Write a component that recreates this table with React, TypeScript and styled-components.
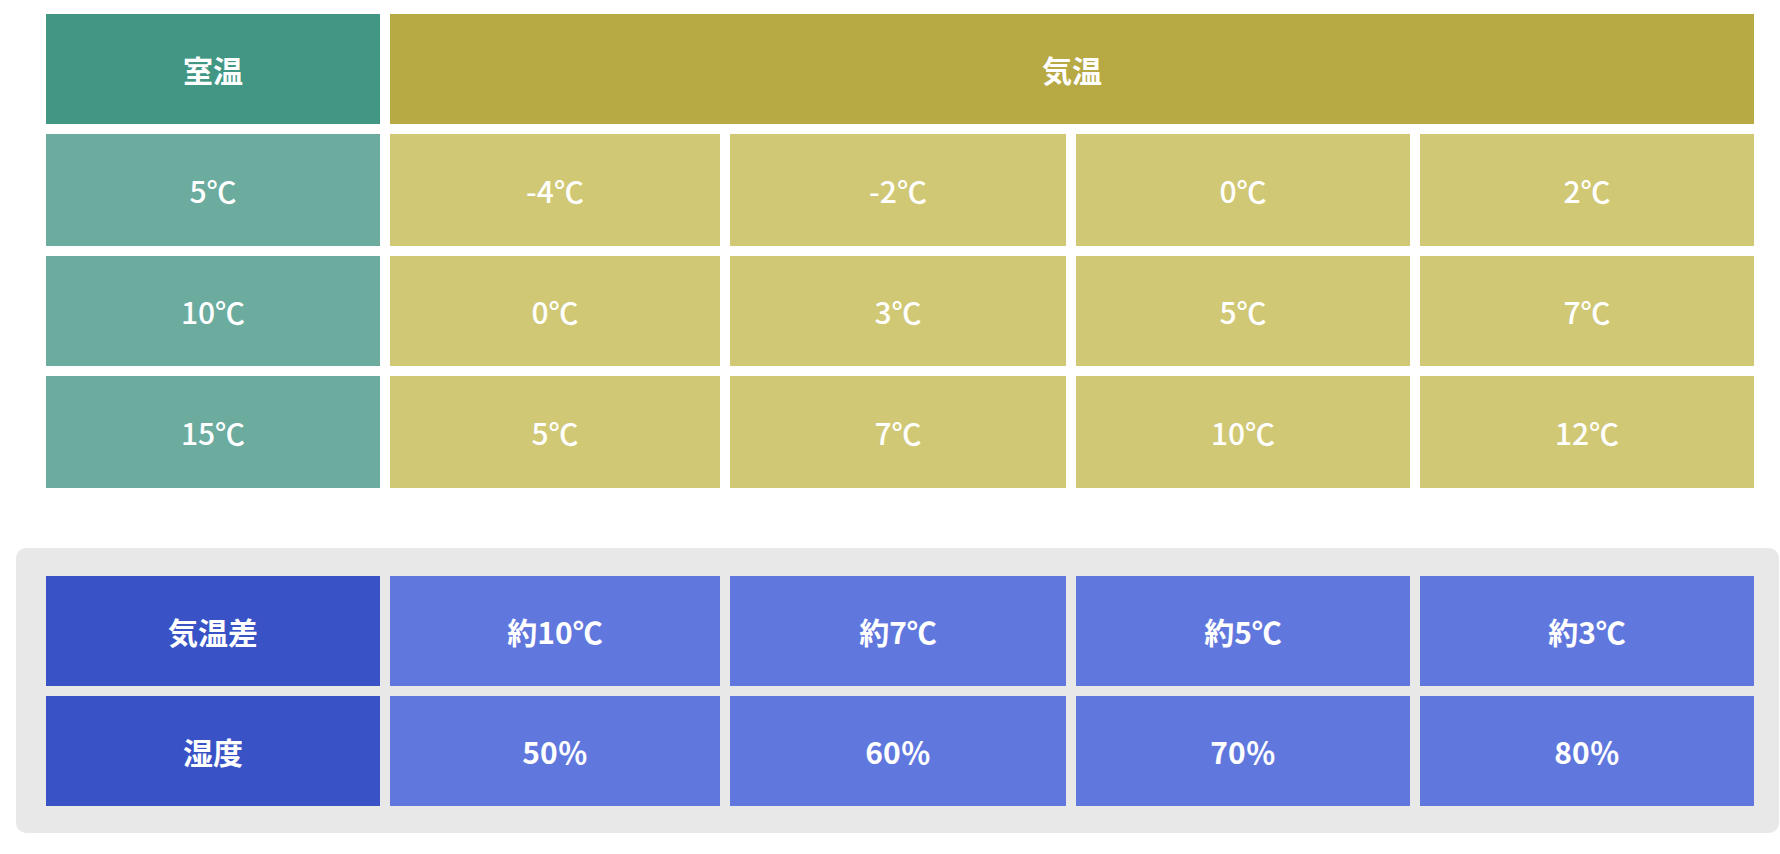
import React from "react";
import styled, { createGlobalStyle } from "styled-components";

const GlobalStyle = createGlobalStyle`
  body {
    margin: 0;
    background: #ffffff;
    font-family: "Noto Sans CJK JP", "Noto Sans", sans-serif;
  }
`;

const Page = styled.main`
  padding: 14px 1px 21px 16px;
`;

const Grid = styled.div`
  display: grid;
  grid-template-columns: 334px 330px 336px 334px 1fr;
  column-gap: 10px;
  row-gap: 10px;
`;

const TempGrid = styled(Grid)`
  margin: 0 25px 0 30px;
  grid-template-rows: 110px 112px 110px 112px;
`;

const DiffBox = styled.section`
  margin-top: 60px;
  padding: 28px 25px 27px 30px;
  background: #e8e8e8;
  border-radius: 10px;
`;

const DiffGrid = styled(Grid)`
  grid-template-rows: 110px 110px;
`;

const Cell = styled.div<{ $bg: string; $weight?: number; $span?: number }>`
  display: flex;
  align-items: center;
  justify-content: center;
  background: ${(p) => p.$bg};
  color: #ffffff;
  font-size: 30px;
  font-weight: ${(p) => p.$weight ?? 500};
  grid-column: ${(p) => (p.$span ? `span ${p.$span}` : "auto")};
`;

const colors = {
  roomHead: "#429684",
  room: "#6bac9f",
  airHead: "#b7a943",
  air: "#d0c874",
  diffHead: "#3953c6",
  diff: "#6077de",
};

const tempRows = [
  { room: "5℃", air: ["-4℃", "-2℃", "0℃", "2℃"] },
  { room: "10℃", air: ["0℃", "3℃", "5℃", "7℃"] },
  { room: "15℃", air: ["5℃", "7℃", "10℃", "12℃"] },
];

const diffRows = [
  { label: "気温差", values: ["約10℃", "約7℃", "約5℃", "約3℃"] },
  { label: "湿度", values: ["50％", "60％", "70％", "80％"] },
];

const App: React.FC = () => {
  return (
    <Page>
      <GlobalStyle />
      <TempGrid>
        <Cell $bg={colors.roomHead} $weight={700}>
          室温
        </Cell>
        <Cell $bg={colors.airHead} $weight={700} $span={4}>
          気温
        </Cell>
        {tempRows.map((row) => (
          <React.Fragment key={row.room}>
            <Cell $bg={colors.room}>{row.room}</Cell>
            {row.air.map((v, i) => (
              <Cell key={i} $bg={colors.air}>
                {v}
              </Cell>
            ))}
          </React.Fragment>
        ))}
      </TempGrid>

      <DiffBox>
        <DiffGrid>
          {diffRows.map((row) => (
            <React.Fragment key={row.label}>
              <Cell $bg={colors.diffHead} $weight={700}>
                {row.label}
              </Cell>
              {row.values.map((v, i) => (
                <Cell key={i} $bg={colors.diff} $weight={700}>
                  {v}
                </Cell>
              ))}
            </React.Fragment>
          ))}
        </DiffGrid>
      </DiffBox>
    </Page>
  );
};

export default App;
